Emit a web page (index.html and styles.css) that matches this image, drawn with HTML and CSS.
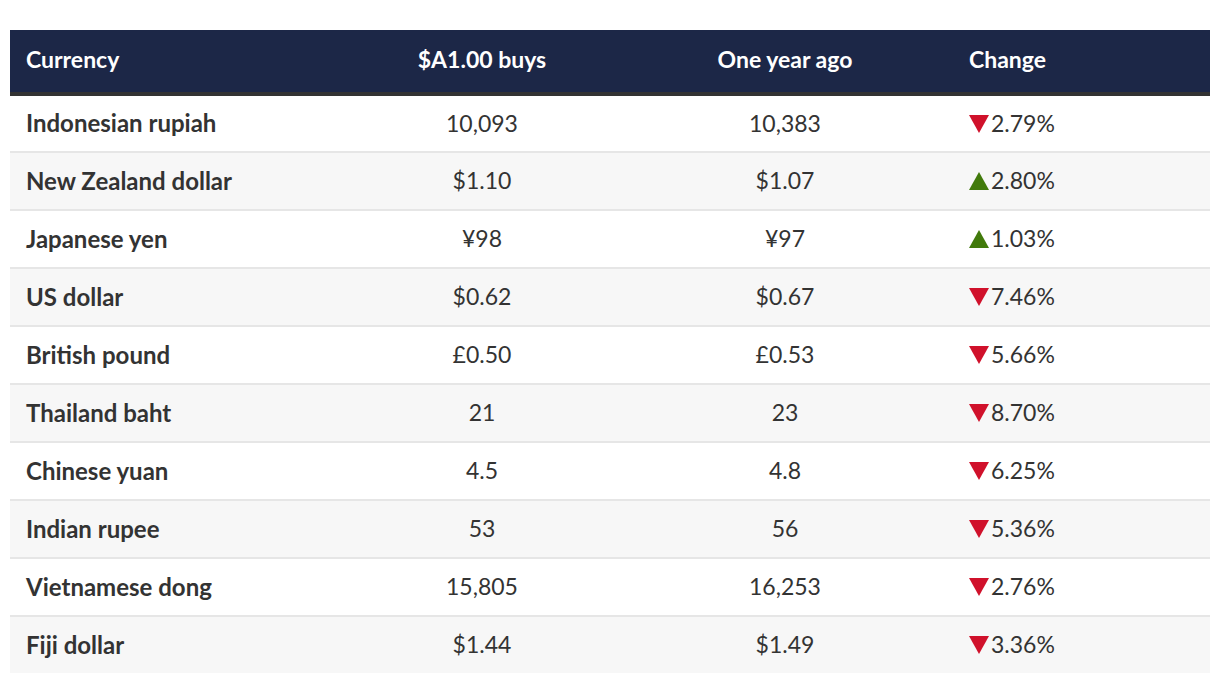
FILE: index.html
```html
<!DOCTYPE html>
<html lang="en">
<head>
<meta charset="utf-8">
<title>Currency</title>
<link rel="stylesheet" href="styles.css">
</head>
<body>
<table class="fx">
  <colgroup>
    <col class="c1"><col class="c2"><col class="c3"><col class="c4">
  </colgroup>
  <thead>
    <tr><th class="name">Currency</th><th class="num">$A1.00 buys</th><th class="num">One year ago</th><th class="chg">Change</th></tr>
  </thead>
  <tbody>
    <tr><td class="name">Indonesian rupiah</td><td class="num">10,093</td><td class="num">10,383</td><td class="chg"><svg class="tri down" viewBox="0 0 20 18"><polygon points="0,0 20,0 10,18"/></svg>2.79%</td></tr>
    <tr><td class="name">New Zealand dollar</td><td class="num">$1.10</td><td class="num">$1.07</td><td class="chg"><svg class="tri up" viewBox="0 0 20 18"><polygon points="10,0 20,18 0,18"/></svg>2.80%</td></tr>
    <tr><td class="name">Japanese yen</td><td class="num">¥98</td><td class="num">¥97</td><td class="chg"><svg class="tri up" viewBox="0 0 20 18"><polygon points="10,0 20,18 0,18"/></svg>1.03%</td></tr>
    <tr><td class="name">US dollar</td><td class="num">$0.62</td><td class="num">$0.67</td><td class="chg"><svg class="tri down" viewBox="0 0 20 18"><polygon points="0,0 20,0 10,18"/></svg>7.46%</td></tr>
    <tr><td class="name">British pound</td><td class="num">£0.50</td><td class="num">£0.53</td><td class="chg"><svg class="tri down" viewBox="0 0 20 18"><polygon points="0,0 20,0 10,18"/></svg>5.66%</td></tr>
    <tr><td class="name">Thailand baht</td><td class="num">21</td><td class="num">23</td><td class="chg"><svg class="tri down" viewBox="0 0 20 18"><polygon points="0,0 20,0 10,18"/></svg>8.70%</td></tr>
    <tr><td class="name">Chinese yuan</td><td class="num">4.5</td><td class="num">4.8</td><td class="chg"><svg class="tri down" viewBox="0 0 20 18"><polygon points="0,0 20,0 10,18"/></svg>6.25%</td></tr>
    <tr><td class="name">Indian rupee</td><td class="num">53</td><td class="num">56</td><td class="chg"><svg class="tri down" viewBox="0 0 20 18"><polygon points="0,0 20,0 10,18"/></svg>5.36%</td></tr>
    <tr><td class="name">Vietnamese dong</td><td class="num">15,805</td><td class="num">16,253</td><td class="chg"><svg class="tri down" viewBox="0 0 20 18"><polygon points="0,0 20,0 10,18"/></svg>2.76%</td></tr>
    <tr><td class="name">Fiji dollar</td><td class="num">$1.44</td><td class="num">$1.49</td><td class="chg"><svg class="tri down" viewBox="0 0 20 18"><polygon points="0,0 20,0 10,18"/></svg>3.36%</td></tr>
  </tbody>
</table>
</body>
</html>
```

FILE: styles.css
```css
html, body {
  margin: 0;
  padding: 0;
  background: #fff;
}
body {
  padding: 30px 10px 0 10px;
  font-family: Lato, "Open Sans", "Liberation Sans", sans-serif;
  color: #333;
}
.fx {
  width: 1200px;
  border-collapse: collapse;
  table-layout: fixed;
}
.c1 { width: 320px; }
.c2 { width: 304px; }
.c3 { width: 302px; }
.c4 { width: 274px; }
.fx th {
  background: #1c2747;
  color: #fff;
  font-weight: 700;
  font-size: 23px;
  height: 64px;
  padding: 0 16px 4px 16px;
  border-bottom: 4px solid #333;
  box-sizing: border-box;
  vertical-align: middle;
}
.fx td {
  height: 58px;
  box-sizing: border-box;
  padding: 0 16px 2px 16px;
  font-size: 23px;
  border-bottom: 2px solid #e6e6e6;
  vertical-align: middle;
}
.fx tbody tr:nth-child(even) td { background: #f7f7f7; }
.fx tbody tr:last-child td { border-bottom: 2px solid #fff; }
.fx .name { text-align: left; }
.fx td.name { font-weight: 700; font-size: 24px; }
.fx .num { text-align: center; font-weight: 400; }
.fx th.num { font-weight: 700; }
.fx .chg { text-align: left; padding-left: 33px; }
.tri {
  width: 20px;
  height: 18px;
  margin-right: 2px;
  vertical-align: -1px;
}
.tri.down { fill: #d0112b; }
.tri.up { fill: #417a0b; }
```
